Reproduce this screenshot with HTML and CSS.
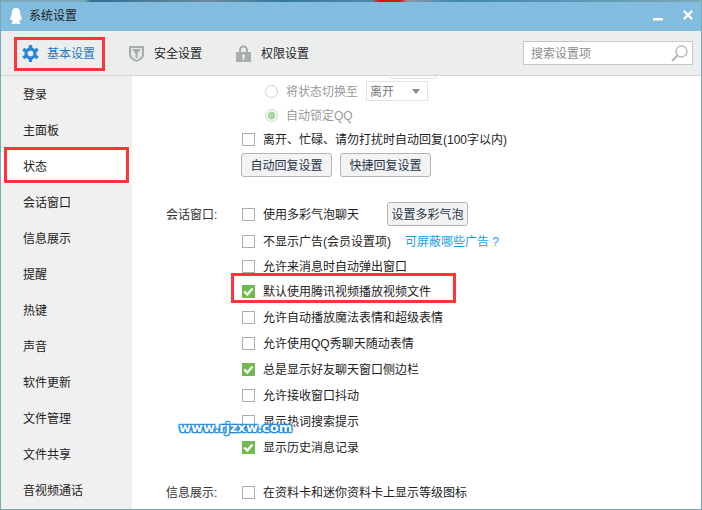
FILE: index.html
```html
<!DOCTYPE html>
<html lang="zh-CN">
<head>
<meta charset="utf-8">
<title>系统设置</title>
<link rel="stylesheet" href="styles.css">
</head>
<body>
<div class="window">
  <div class="desktop-strip"></div>
  <header class="titlebar">
    <svg class="qq-logo" width="12" height="18" viewBox="0 0 14 20" preserveAspectRatio="none"><path fill="#fff" d="M7 0C3.600 0 2.300 2.600 2.200 5.400 2.100 6.900 1.800 7.600 1.200 9 .3 11 0 12.600.5 13.400c.4.5 1 .1 1.500-.8.2 1.100.7 2 1.400 2.700C2.300 15.800 1.700 16.500 2 17.200 2.400 18 4.300 18 6.200 17.500h1.600C9.700 18 11.600 18 12 17.200c.3-.7-.3-1.400-1.400-1.900.7-.7 1.200-1.600 1.400-2.700.5.9 1.100 1.300 1.500.8.500-.8.200-2.400-.7-4.400-.6-1.400-.9-2.100-1-3.600C11.700 2.600 10.400 0 7 0z"/></svg>
    <span class="title-text txt">系统设置</span>
    <div class="window-controls">
      <svg class="ctl-min" width="10" height="3" viewBox="0 0 10 3"><rect width="10" height="2.500" fill="#fff"/></svg>
      <svg width="10" height="10" viewBox="0 0 10 10"><path d="M.7.7l8.600 8.600M9.300.7L.7 9.300" stroke="#fff" stroke-width="2.200" fill="none"/></svg>
    </div>
  </header>
  <nav class="toolbar">
    <a class="tab tab-active">
      <svg width="17" height="17" viewBox="0 0 18 18"><g fill="#2a86d6"><path fill-rule="evenodd" d="M9 2.500a6.500 6.500 0 1 0 0 13 6.500 6.500 0 0 0 0-13zM9 6a3 3 0 1 1 0 6 3 3 0 0 1 0-6z"/><rect x="7.200" y="0" width="3.600" height="4" rx=".6"/><rect x="7.200" y="14" width="3.600" height="4" rx=".6"/><rect x="7.200" y="0" width="3.600" height="4" rx=".6" transform="rotate(60 9 9)"/><rect x="7.200" y="14" width="3.600" height="4" rx=".6" transform="rotate(60 9 9)"/><rect x="7.200" y="0" width="3.600" height="4" rx=".6" transform="rotate(120 9 9)"/><rect x="7.200" y="14" width="3.600" height="4" rx=".6" transform="rotate(120 9 9)"/></g></svg>
      <span class="txt">基本设置</span>
    </a>
    <a class="tab">
      <svg width="15" height="17" viewBox="0 0 15 17"><path fill="#a9adb0" d="M0 1h15v9.500c0 2.500-4 5-7.500 6.500C4 15.500 0 13 0 10.500z"/><path fill="#e8eaea" d="M2 3h11v7c0 1.800-3 3.800-5.500 5C5 13.800 2 11.800 2 10z"/><path fill="#a9adb0" d="M3 4h9L8.500 8.500V13h-2V8.500z"/></svg>
      <span class="txt">安全设置</span>
    </a>
    <a class="tab">
      <svg width="15" height="17" viewBox="0 0 15 17"><path fill="none" stroke="#a9adb0" stroke-width="2" d="M4 8V5a3.500 3.500 0 0 1 7 0v3"/><path fill="#a9adb0" fill-rule="evenodd" d="M0 7h15v10H0zM7.500 9.500a1.500 1.500 0 0 0-.8 2.800V15h1.600v-2.700a1.500 1.500 0 0 0-.8-2.800z"/></svg>
      <span class="txt">权限设置</span>
    </a>
    <div class="search">
      <span class="txt">搜索设置项</span>
      <svg width="17" height="17" viewBox="0 0 17 17"><circle cx="10.500" cy="6.500" r="5.500" fill="none" stroke="#b4b4b4" stroke-width="1.300"/><path d="M6.500 10.500L1 16" stroke="#b4b4b4" stroke-width="2" fill="none"/></svg>
    </div>
  </nav>
  <div class="body">
    <aside class="sidebar">
      <div class="side-item">登录</div>
      <div class="side-item">主面板</div>
      <div class="side-item side-active">状态</div>
      <div class="side-item">会话窗口</div>
      <div class="side-item">信息展示</div>
      <div class="side-item">提醒</div>
      <div class="side-item">热键</div>
      <div class="side-item">声音</div>
      <div class="side-item">软件更新</div>
      <div class="side-item">文件管理</div>
      <div class="side-item">文件共享</div>
      <div class="side-item">音视频通话</div>
    </aside>
    <main class="content">
      <div class="cut-off"></div>
      <div class="row row-short sub-row">
        <span class="radio"></span><span class="muted txt">将状态切换至</span>
        <span class="select"><span class="txt">离开</span><i class="caret"></i></span>
      </div>
      <div class="row row-short sub-row">
        <span class="radio radio-on"></span><span class="muted txt">自动锁定QQ</span>
      </div>
      <div class="row row-short indent"><span class="box"></span><span class="txt">离开、忙碌、请勿打扰时自动回复(100字以内)</span></div>
      <div class="row row-buttons indent">
        <span class="btn btn-wide"><span class="txt">自动回复设置</span></span>
        <span class="btn btn-wide"><span class="txt">快捷回复设置</span></span>
      </div>
      <div class="row section-first"><span class="label txt">会话窗口:</span><span class="box"></span><span class="fixed-text txt">使用多彩气泡聊天</span><span class="btn btn-small"><span class="txt">设置多彩气泡</span></span></div>
      <div class="row row-offset indent"><span class="box"></span><span class="txt">不显示广告(会员设置项)</span><span class="link txt">可屏蔽哪些广告 ?</span></div>
      <div class="row row-short indent"><span class="box"></span><span class="txt">允许来消息时自动弹出窗口</span></div>
      <div class="row indent"><span class="box box-on"><svg width="13" height="13" viewBox="0 0 13 13"><path d="M2.300 6.500l3 3 5.200-6" stroke="#fff" stroke-width="2.300" fill="none"/></svg></span><span class="txt">默认使用腾讯视频播放视频文件</span></div>
      <div class="row indent"><span class="box"></span><span class="txt">允许自动播放魔法表情和超级表情</span></div>
      <div class="row indent"><span class="box"></span><span class="txt">允许使用QQ秀聊天随动表情</span></div>
      <div class="row indent"><span class="box box-on"><svg width="13" height="13" viewBox="0 0 13 13"><path d="M2.300 6.500l3 3 5.200-6" stroke="#fff" stroke-width="2.300" fill="none"/></svg></span><span class="txt">总是显示好友聊天窗口侧边栏</span></div>
      <div class="row indent"><span class="box"></span><span class="txt">允许接收窗口抖动</span></div>
      <div class="row indent"><span class="box"></span><span class="txt">显示热词搜索提示</span></div>
      <div class="row indent"><span class="box box-on"><svg width="13" height="13" viewBox="0 0 13 13"><path d="M2.300 6.500l3 3 5.200-6" stroke="#fff" stroke-width="2.300" fill="none"/></svg></span><span class="txt">显示历史消息记录</span></div>
      <div class="row section-next"><span class="label txt">信息展示:</span><span class="box"></span><span class="txt">在资料卡和迷你资料卡上显示等级图标</span></div>
    </main>
  </div>
  <div class="mark mark-tab"></div>
  <div class="mark mark-side"></div>
  <div class="mark mark-row"></div>
  <div class="watermark">www.rjzxw.com</div>
</div>
</body>
</html>
```
FILE: styles.css
```css
* { box-sizing: border-box; }
html, body { margin: 0; padding: 0; }
body { width: 702px; height: 510px; overflow: hidden; background: #7fa8b4; font-family: "Liberation Sans", "Noto Sans CJK SC", sans-serif; font-size: 12px; color: #222; }
.txt { padding-bottom: 2px; }
.window { position: relative; width: 702px; height: 510px; display: flex; flex-direction: column; padding: 0 1px 1px; background: #7aa9b6; overflow: hidden; }
.desktop-strip { height: 2px; flex: none; margin: 0 -1px; background: linear-gradient(90deg, #7ba8b8 0, #7ba8b8 12%, #2f6f93 13%, #6b8a9c 30%, #33799f 40%, #4f87a8 53%, #d01818 54%, #d01818 57%, #8a98a5 58%, #3f87ae 65%, #7ba8b8 100%); }
.titlebar { height: 29px; flex: none; background: #82bddf; display: flex; align-items: center; padding: 0 8px 3px 9px; color: #222; }
.qq-logo { flex: none; margin-right: 7px; margin-top: 3px; }
.window-controls { margin-left: auto; display: flex; align-items: center; gap: 20px; }
.ctl-min { margin-top: 8px; }
.toolbar { height: 45px; flex: none; background: #eceeee; border-bottom: 1px solid #d6d6d6; display: flex; align-items: center; padding: 0 8px 0 21px; }
.tab { display: flex; align-items: center; gap: 10px; margin-right: 34px; }
.tab svg { flex: none; }
.tab-active { color: #1f78c1; gap: 8px; }
.search { margin-left: auto; width: 170px; height: 24px; background: #fff; border: 1px solid #c8c8c8; display: flex; align-items: center; justify-content: space-between; padding: 0 4px 0 7px; color: #8c8c8c; }
.body { flex: 1; display: flex; min-height: 0; background: #fff; }
.sidebar { width: 131px; flex: none; background: #f0f0f0; }
.side-item { height: 36px; line-height: 38px; padding-left: 22px; }
.side-active { background: #fff; }
.content { flex: 1; padding-left: 34px; overflow: hidden; }
.cut-off { width: 48px; height: 3px; margin-left: 223px; border: 1px solid #e6e6e6; border-top: 0; border-radius: 0 0 3px 3px; }
.row { height: 26px; display: flex; align-items: center; }
.row-short { height: 24px; }
.row-offset { margin-top: 1px; }
.row-buttons { height: 28px; gap: 8px; }
.row-buttons .btn:first-child { margin-left: -1px; }
.section-first { margin-top: 22px; }
.section-next { margin-top: 19px; }
.indent { padding-left: 76px; }
.sub-row { padding-left: 99px; }
.label { width: 76px; flex: none; color: #333; }
.box { width: 13px; height: 13px; flex: none; border: 1px solid #adadad; background: #fff; margin-right: 8px; }
.box-on { border: 0; background: #6fbb50; display: block; }
.box-on svg { display: block; }
.radio { width: 13px; height: 13px; flex: none; border-radius: 50%; border: 1px solid #d0d0d0; background: #fff; margin-right: 8px; }
.radio-on { background: radial-gradient(circle, #a8d8a0 0, #a8d8a0 3.500px, #fff 4.500px); }
.muted { color: #9a9a9a; }
.select { width: 62px; height: 20px; margin-left: 8px; border: 1px solid #e2e2e2; display: flex; align-items: center; justify-content: space-between; padding: 0 7px 0 3px; color: #777; }
.caret { width: 0; height: 0; border: 4px solid transparent; border-top: 5px solid #8c8c8c; border-bottom: 0; }
.btn { display: flex; align-items: center; justify-content: center; height: 24px; background: #f3f3f3; border: 1px solid #b4b4b4; border-radius: 3px; color: #1f3448; }
.btn-wide { width: 91px; }
.btn-small { width: 81px; }
.fixed-text { width: 124px; flex: none; }
.link { color: #1ca0e2; margin-left: 14px; }
.mark { position: absolute; border: 3px solid #ff3338; pointer-events: none; }
.mark-tab { left: 14px; top: 37px; width: 91px; height: 34px; }
.mark-side { left: 4px; top: 147px; width: 125px; height: 36px; }
.mark-row { left: 231px; top: 273px; width: 225px; height: 30px; }
.watermark { position: absolute; left: 179px; top: 418px; font-family: "DejaVu Sans", sans-serif; font-weight: 700; font-size: 13px; line-height: 20px; color: #fff; text-shadow: 0 0 2px #1b86d8, 1px 1px 1px #1b86d8, -1px -1px 1px #1b86d8, 1px -1px 1px #1b86d8, -1px 1px 1px #1b86d8, 0 0 3px #1b86d8; }
```
